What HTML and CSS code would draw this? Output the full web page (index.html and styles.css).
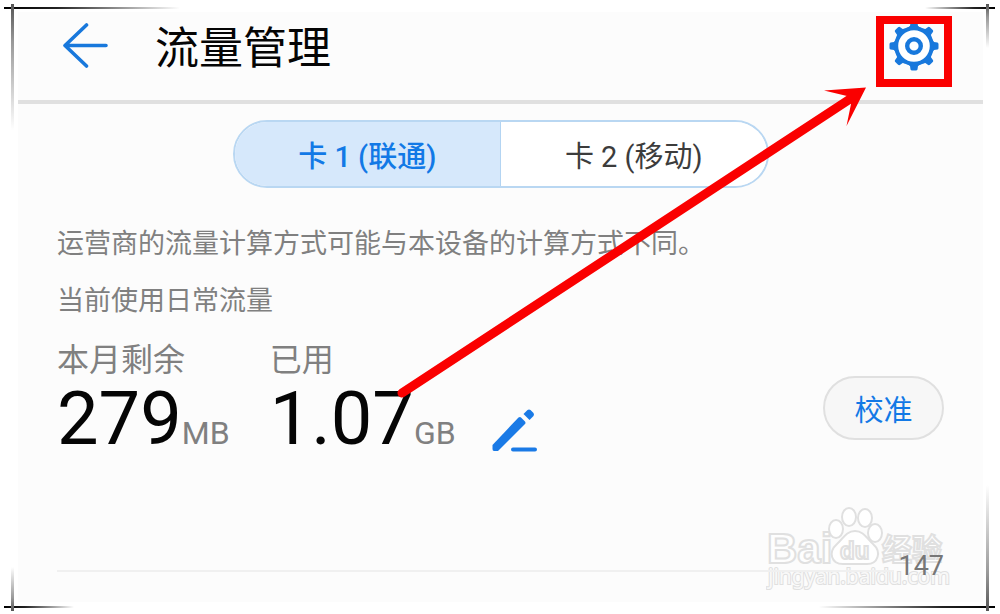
FILE: index.html
```html
<!DOCTYPE html>
<html lang="zh-CN">
<head>
    <meta charset="UTF-8">
    <meta name="viewport" content="width=device-width, initial-scale=1.0">
    <title>流量管理</title>
    <link rel="stylesheet" href="styles.css">
</head>
<body>

    <div class="frame">
        <span class="line-h top-left"></span>
        <span class="line-v top-left"></span>
        <span class="line-h top-right"></span>
        <span class="line-v top-right"></span>
        <span class="line-h bottom-left"></span>
        <span class="line-v bottom-left"></span>
        <span class="line-h bottom-right"></span>
        <span class="line-v bottom-right"></span>

        <main class="panel">
            <header class="header">
                <button type="button" class="icon-btn" aria-label="返回">
                    <svg width="46" height="46" viewBox="0 0 46 46" fill="none" stroke="#1878dc" stroke-width="3.6" stroke-linecap="round" stroke-linejoin="round">
                        <path d="M44 22.500H3M24.500 2L3 22.500L24.500 43"/>
                    </svg>
                </button>
                <h1>流量管理</h1>
                <button type="button" class="icon-btn settings" aria-label="设置">
                    <svg width="50" height="50" viewBox="-25 -25 50 50" fill="#1878dc">
                        <defs>
                            <path id="tooth" d="M-7 -18L-4 -20L-3.5 -23.5Q-3 -24.5 -2 -24.5H2Q3 -24.5 3.5 -23.5L4 -20L7 -18Z"/>
                        </defs>
                        <use href="#tooth"/>
                        <use href="#tooth" transform="rotate(45)"/>
                        <use href="#tooth" transform="rotate(90)"/>
                        <use href="#tooth" transform="rotate(135)"/>
                        <use href="#tooth" transform="rotate(180)"/>
                        <use href="#tooth" transform="rotate(225)"/>
                        <use href="#tooth" transform="rotate(270)"/>
                        <use href="#tooth" transform="rotate(315)"/>
                        <circle r="17.8" fill="#fff" stroke="#1878dc" stroke-width="4"/>
                        <circle r="6.8" fill="none" stroke="#1878dc" stroke-width="4.4"/>
                    </svg>
                    <span class="highlight"></span>
                </button>
            </header>

            <div class="content">
                <div class="tabs">
                    <button type="button" class="tab active">卡 1 (联通)</button>
                    <button type="button" class="tab">卡 2 (移动)</button>
                </div>

                <p>运营商的流量计算方式可能与本设备的计算方式不同。</p>
                <p>当前使用日常流量</p>

                <section class="usage">
                    <div class="stat">
                        <div class="label">本月剩余</div>
                        <div class="value">279<span class="unit">MB</span></div>
                    </div>
                    <div class="stat">
                        <div class="label">已用</div>
                        <div class="value">1.07<span class="unit">GB</span></div>
                    </div>
                    <button type="button" class="icon-btn edit" aria-label="编辑">
                        <svg width="46" height="44" viewBox="0 0 46 44" fill="#1a7ae6">
                            <path d="M0.5 37L26.500 9.500Q28 8.500 29 9.500L33 13.500Q34 15 33 16L6 43H2Q0.5 43 0.5 41Z"/>
                            <path d="M31.500 6L35.500 2Q37 1 38.500 2L41.500 5Q42.500 6.500 41.500 8L37.500 12Z"/>
                            <rect x="19" y="39.500" width="26" height="4" rx="2"/>
                        </svg>
                    </button>
                    <button type="button" class="calibrate">校准</button>
                </section>

                <div class="scale">
                    <hr>
                    <span>147</span>
                </div>
            </div>

            <svg class="watermark" width="184" height="90" viewBox="0 0 184 90">
                <g class="outline">
                    <text class="wm-bai" x="1" y="60">Bai</text>
                    <ellipse cx="70" cy="26" rx="7" ry="9"/>
                    <ellipse cx="83" cy="14" rx="7" ry="9"/>
                    <ellipse cx="99" cy="15" rx="7" ry="9"/>
                    <ellipse cx="109" cy="30" rx="7" ry="9"/>
                    <path d="M89 28C98 28 101 36 107 41C116 49 112 61 101 61H77C65 61 62 49 71 41C77 36 80 28 89 28Z"/>
                    <text class="wm-du" x="74" y="56">du</text>
                    <text class="wm-cn" x="116" y="57">经验</text>
                    <text class="wm-url" x="2" y="81">jingyan.baidu.com</text>
                </g>
            </svg>
        </main>

        <!-- arrow pointing at the settings button -->
        <svg class="arrow" width="472" height="316" viewBox="0 0 472 316">
            <path d="M6 309L454 15" stroke="#fa0000" stroke-width="9" stroke-linecap="round"/>
            <path d="M470 3.500L428 6.500L451 12L455 20L450.500 42Z" fill="#fa0000"/>
        </svg>
    </div>

</body>
</html>
```

FILE: styles.css
```css
* {
    box-sizing: border-box;
}

body {
    margin: 0;
    background-color: #fff;
    color: #050505;
    font-family: Roboto, "Noto Sans CJK SC", sans-serif;
}

h1, p {
    margin: 0;
    font-weight: normal;
}

button {
    font-family: inherit;
    cursor: pointer;
}

.frame {
    position: relative;
    padding: 12px 17px 13px 18px;
}

.panel {
    position: relative;
    background: #fcfcfc;
}

/* Corner lines */
.line-h, .line-v {
    position: absolute;
}

.line-h {
    height: 2px;
    width: 176px;
    background: linear-gradient(to right, #000, #222 30%, transparent);
}

.line-v {
    width: 3px;
    height: 126px;
    background: linear-gradient(#555, #999 30%, transparent);
}

.line-h.top-left {
    top: 7px;
    left: 4px;
}

.line-v.top-left {
    top: 4px;
    left: 11px;
}

.line-h.top-right {
    top: 7px;
    right: 5px;
    width: 70px;
    background: linear-gradient(to left, #000, #222 30%, transparent);
}

.line-v.top-right {
    top: 4px;
    right: 11px;
    height: 44px;
}

.line-h.bottom-left {
    bottom: 7px;
    left: 4px;
    width: 70px;
}

.line-v.bottom-left {
    bottom: 4px;
    left: 11px;
    height: 44px;
    background: linear-gradient(to top, #555, #999 30%, transparent);
}

.line-h.bottom-right {
    bottom: 7px;
    right: 5px;
    background: linear-gradient(to left, #000, #222 30%, transparent);
}

.line-v.bottom-right {
    bottom: 4px;
    right: 11px;
    background: linear-gradient(to top, #555, #999 30%, transparent);
}

/* Header */
.header {
    display: flex;
    align-items: center;
    height: 92px;
    padding: 0 44px 20px;
    border-bottom: 4px solid #e0e0e0;
}

.header h1 {
    margin-left: 47px;
    padding-top: 6px;
    font-size: 44px;
    line-height: 64px;
}

.icon-btn {
    position: relative;
    display: flex;
    padding: 0;
    border: none;
    background: none;
}

.settings {
    margin-left: auto;
}

.highlight {
    position: absolute;
    top: -5px;
    left: -13px;
    width: 76px;
    height: 71px;
    border: 8px solid #fa0000;
}

.content {
    padding: 16px 39px;
}

/* SIM tabs */
.tabs {
    display: flex;
    width: 536px;
    max-width: 100%;
    height: 68px;
    margin: 0 auto 38px;
    border: 2px solid #b9d7f2;
    border-radius: 34px;
    overflow: hidden;
}

.tab {
    flex: 1;
    padding: 0;
    border: none;
    background: #fff;
    color: #3c3c3c;
    font-size: 29px;
}

.tab.active {
    border-right: 1px solid #b3d4f2;
    background: #d6e8fb;
    color: #1279e6;
    font-weight: 500;
}

.content p {
    margin-bottom: 21px;
    color: #808080;
    font-size: 27px;
    line-height: 36px;
}

/* Data usage */
.usage {
    display: flex;
    align-items: flex-end;
}

.stat {
    margin-right: 40px;
}

.stat + .stat {
    margin-right: 36px;
}

.label {
    color: #808080;
    font-size: 32px;
    line-height: 41px;
}

.value {
    font-size: 74px;
    line-height: 76px;
}

.unit {
    color: #808080;
    font-size: 32px;
    line-height: 40px;
}

.edit {
    margin-bottom: 5px;
}

.calibrate {
    width: 121px;
    height: 64px;
    margin-left: auto;
    margin-bottom: 17px;
    border: 2px solid #e0e0e0;
    border-radius: 32px;
    background: #f7f7f7;
    color: #1279e6;
    font-size: 29px;
}

.scale {
    position: relative;
    z-index: 1;
    display: flex;
    align-items: flex-end;
    gap: 4px;
    margin-top: 89px;
    color: #777;
    font-size: 27px;
    line-height: 40px;
}

.scale hr {
    flex: 1;
    margin: 0 0 14px;
    border: none;
    border-top: 2px solid #f0f0f0;
}

/* Watermark */
.watermark {
    position: absolute;
    right: 33px;
    bottom: 9px;
}

.outline {
    fill: #fff;
    fill-opacity: 0.8;
    stroke: #e0e0e0;
    stroke-width: 2px;
    font-family: "Liberation Sans", "Noto Sans CJK SC", sans-serif;
    font-weight: bold;
}

.wm-bai {
    font-size: 42px;
}

.wm-du {
    font-size: 24px;
}

.wm-cn {
    font-size: 30px;
}

.wm-url {
    font-family: "Noto Sans", sans-serif;
    font-size: 21px;
    font-weight: normal;
    paint-order: stroke;
}

.arrow {
    position: absolute;
    top: 84px;
    left: 396px;
    pointer-events: none;
}
```
